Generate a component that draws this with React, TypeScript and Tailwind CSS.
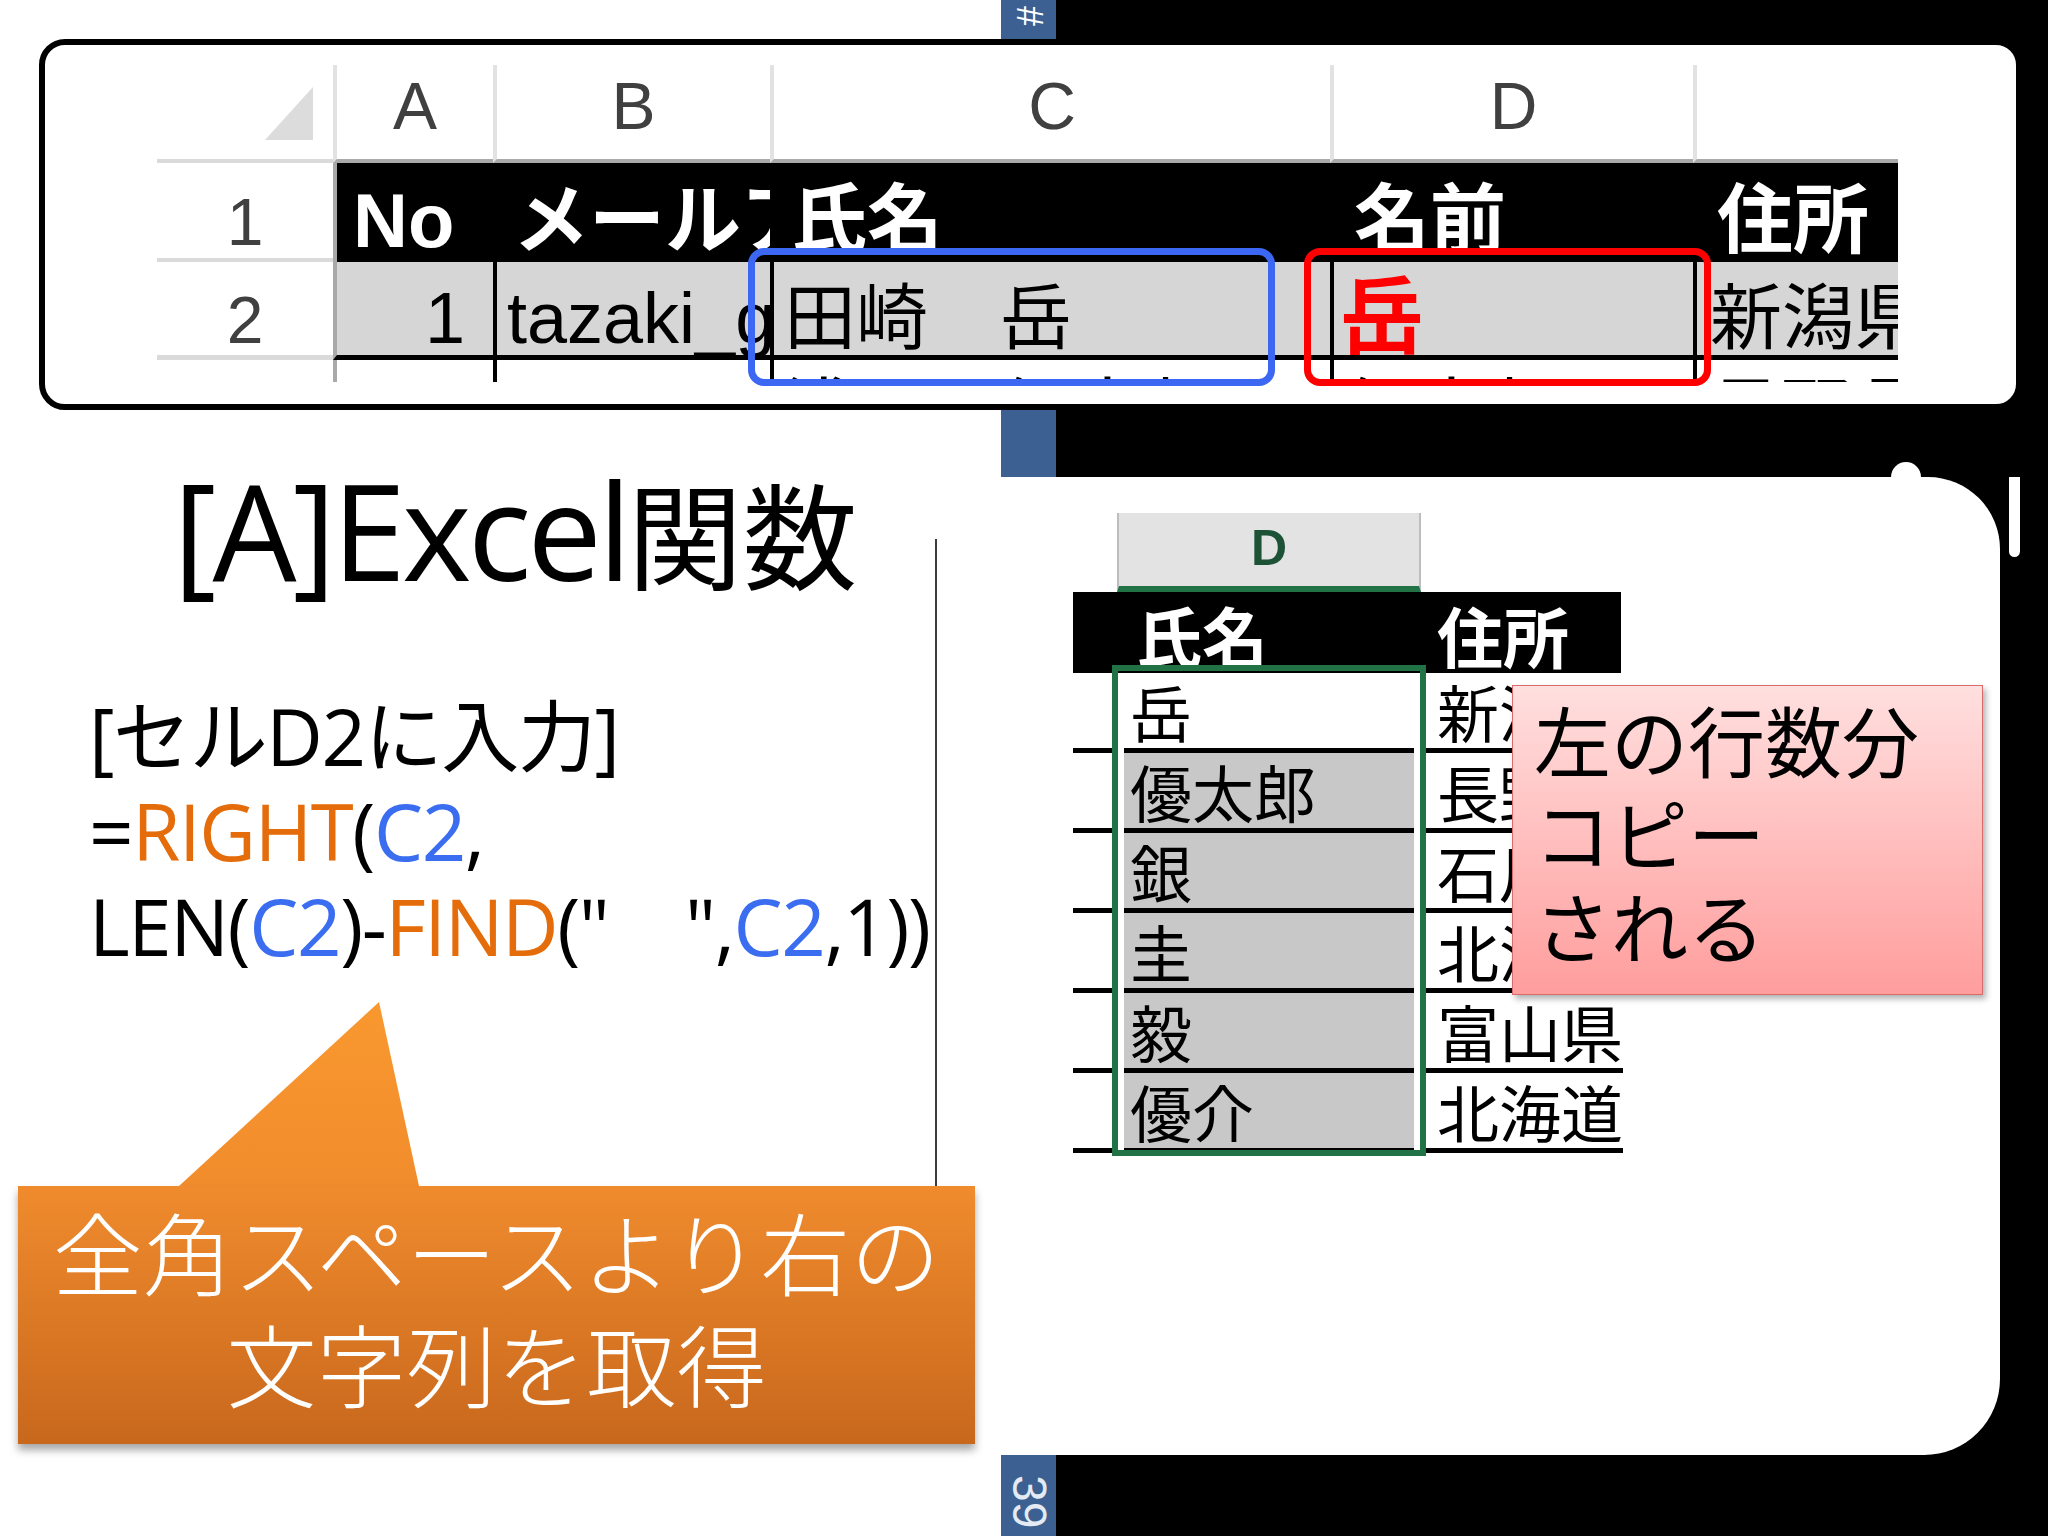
const sheetFont = "font-['Liberation_Sans','Noto_Sans_CJK_JP',sans-serif]";
const cjkFont = "font-['Noto_Sans_CJK_JP',sans-serif]";

// top spreadsheet: column widths include the 4px left border
const topCols = ['w-[160px]', 'w-[277px]', 'w-[560px]', 'w-[363px]', 'w-[205px]'];

function TopSheet() {
  const letters = ['A', 'B', 'C', 'D', ''];
  const head1 = [
    { t: 'No', pl: 'pl-[16px]' },
    { t: 'メールアドレス', pl: 'pl-[16px]' },
    { t: '氏名', pl: 'pl-[17px]' },
    { t: '名前', pl: 'pl-[20px]' },
    { t: '住所', pl: 'pl-[20px]' },
  ];
  const row3 = ['', '', '浅野　優太郎', '優太郎', '長野県'];

  return (
    <div className={`ml-[112px] mt-[20px] w-[1741px] h-[317px] overflow-hidden ${sheetFont}`}>
      {/* column letters */}
      <div className="flex h-[98px]">
        <div className="w-[176px] shrink-0 border-b-4 border-[#dadada] flex justify-end items-start pt-[22px] pr-[20px]">
          <svg width="48" height="53" viewBox="0 0 48 53">
            <polygon points="48,0 48,53 0,53" fill="#dcdcdc" />
          </svg>
        </div>
        {letters.map((l, i) => (
          <div
            key={i}
            className={`${topCols[i]} shrink-0 border-l-4 border-l-[#e2e2e2] border-b-4 border-b-[#a9a9a9] flex justify-center items-start pt-[8px] text-[66px] leading-none text-[#404040]`}
          >
            {l}
          </div>
        ))}
      </div>

      {/* row 1 : headers */}
      <div className="flex h-[99px]">
        <div className="w-[176px] shrink-0 border-b-4 border-[#dadada] flex justify-center pt-[26px] text-[66px] leading-none text-[#404040]">
          1
        </div>
        {head1.map((h, i) => (
          <div
            key={h.t}
            className={`${topCols[i]} shrink-0 overflow-hidden whitespace-nowrap bg-black text-white font-bold text-[76px] leading-none pt-[20px] border-l-4 ${i === 0 ? 'border-l-[#a9a9a9]' : 'border-l-black'} ${h.pl}`}
          >
            {h.t}
          </div>
        ))}
      </div>

      {/* row 2 : data */}
      <div className="flex h-[98px]">
        <div className="w-[176px] shrink-0 border-b-[5px] border-[#dadada] flex justify-center pt-[25px] text-[66px] leading-none text-[#404040]">
          2
        </div>
        <div className="w-[160px] shrink-0 bg-[#d6d6d6] border-l-4 border-l-[#a9a9a9] border-b-[5px] border-b-black text-right pr-[28px] pt-[20px] text-[72px] leading-none text-black">
          1
        </div>
        <div className="w-[277px] shrink-0 overflow-hidden whitespace-nowrap bg-[#d6d6d6] border-l-4 border-l-black border-b-[5px] border-b-black pl-[10px] pt-[20px] text-[72px] leading-none text-black">
          tazaki_gaku@
        </div>
        <div className="w-[560px] shrink-0 overflow-hidden whitespace-nowrap bg-[#d6d6d6] border-l-4 border-l-black border-b-[5px] border-b-black pl-[10px] pt-[20px] text-[72px] leading-none text-black">
          田崎　岳
        </div>
        <div className="w-[363px] shrink-0 overflow-hidden whitespace-nowrap bg-[#d6d6d6] border-l-4 border-l-black border-b-[5px] border-b-black pl-[6px] pt-[14px] text-[84px] leading-none font-bold text-[#ff0000]">
          岳
        </div>
        <div className="w-[205px] shrink-0 overflow-hidden whitespace-nowrap bg-[#d6d6d6] border-l-4 border-l-black border-b-[5px] border-b-black pl-[13px] pt-[20px] text-[72px] leading-none text-black">
          新潟県
        </div>
      </div>

      {/* row 3 : cut off by the picture edge */}
      <div className="flex h-[60px]">
        <div className="w-[176px] shrink-0" />
        {row3.map((t, i) => (
          <div
            key={i}
            className={`${topCols[i]} shrink-0 overflow-hidden whitespace-nowrap border-l-4 ${i === 0 ? 'border-l-[#a9a9a9]' : 'border-l-black'} pl-[10px] pt-[16px] text-[72px] leading-none text-black`}
          >
            {t}
          </div>
        ))}
      </div>
    </div>
  );
}

function TopSheetBox() {
  return (
    <div className="absolute left-[39px] top-[39px] w-[1983px] h-[371px] rounded-[26px] border-[6px] border-black bg-white">
      <TopSheet />
      <div className="absolute left-[703px] top-[203px] w-[527px] h-[138px] rounded-[16px] border-[7px] border-[#3b67f2]" />
      <div className="absolute left-[1259px] top-[203px] w-[407px] h-[138px] rounded-[16px] border-[7px] border-[#ff0000]" />
    </div>
  );
}

function LeftColumn() {
  const orange = 'text-[#e46c0a]';
  const blue = 'text-[#3a6df0]';
  return (
    <div className="w-[1001px] shrink-0 flex flex-col pt-[463px]">
      <div className="flex items-baseline pl-[173px] whitespace-nowrap text-black">
        <span className="font-['Open_Sans',sans-serif] text-[133px] leading-none tracking-[-4px]">[A]Excel</span>
        <span className={`${cjkFont} text-[115px] leading-none`}>関数</span>
      </div>

      <div className="mt-[93px] pl-[89px] font-['Open_Sans','Noto_Sans_CJK_JP',sans-serif] text-[78px] leading-[95px] tracking-[-1.4px] text-black whitespace-nowrap">
        <div>[セルD2に入力]</div>
        <div>
          =<span className={orange}>RIGHT</span>(<span className={blue}>C2</span>,
        </div>
        <div>
          LEN(<span className={blue}>C2</span>)-<span className={orange}>FIND</span>("　",
          <span className={blue}>C2</span>,1))
        </div>
      </div>

      <div className="mt-[28px] ml-[18px] w-[957px] flex flex-col">
        <svg width="957" height="184" viewBox="0 0 957 184" className="block">
          <defs>
            <linearGradient id="tail" x1="0" y1="0" x2="0" y2="1">
              <stop offset="0" stopColor="#f9982f" />
              <stop offset="1" stopColor="#f18c2c" />
            </linearGradient>
          </defs>
          <polygon points="161,184 361,0 401,184" fill="url(#tail)" />
        </svg>
        <div
          className={`h-[258px] bg-linear-to-b from-[#f08b2d] to-[#c8681d] shadow-[0_6px_8px_rgba(0,0,0,0.35)] pt-[8px] text-center text-white text-[90px] leading-[112px] font-light whitespace-nowrap ${cjkFont}`}
        >
          <div>全角スペースより右の</div>
          <div>文字列を取得</div>
        </div>
      </div>
    </div>
  );
}

function SlideStrip() {
  return (
    <div className="w-[55px] shrink-0 bg-[#3b6091] flex flex-col items-center justify-between pt-[6px] pb-[8px] font-['Liberation_Sans',sans-serif] text-white">
      <span className="[writing-mode:vertical-rl] text-[36px] leading-none">#</span>
      <span className="[writing-mode:vertical-rl] text-[48px] leading-none text-[#e3eaf3]">39</span>
    </div>
  );
}

function RightPanel() {
  const names = ['岳', '優太郎', '銀', '圭', '毅', '優介'];
  const places = ['新潟県', '長野県', '石川県', '北海道', '富山県', '北海道'];
  return (
    <div className="absolute left-[993px] top-[477px] w-[1007px] h-[978px] bg-white rounded-tr-[72px] rounded-br-[76px]">
      <div className={`relative ml-[80px] mt-[36px] w-[548px] ${sheetFont}`}>
        <div className="flex h-[79px]">
          <div className="w-[44px] shrink-0" />
          <div className="w-[304px] shrink-0 bg-[#e3e3e3] border-x-2 border-x-[#bdbdbd] border-b-[6px] border-b-[#217346] flex justify-center pt-[10px] text-[50px] leading-none font-bold text-[#1e5236]">
            D
          </div>
        </div>
        <div className="flex h-[81px] bg-black text-white font-bold text-[66px] leading-none pt-[15px] whitespace-nowrap">
          <div className="w-[39px] shrink-0" />
          <div className="w-[314px] shrink-0 pl-[24px]">氏名</div>
          <div className="pl-[11px]">住所</div>
        </div>
        {names.map((n, i) => (
          <div key={i} className="flex h-[80px] text-[62px] leading-none text-black whitespace-nowrap">
            <div className="w-[39px] shrink-0 border-b-[5px] border-black" />
            <div className="w-[314px] shrink-0 px-[12px]">
              <div className={`h-full border-b-[5px] border-black pl-[6px] pt-[13px] ${i === 0 ? 'bg-white' : 'bg-[#c8c8c8]'}`}>
                {n}
              </div>
            </div>
            <div className="flex-1 border-b-[5px] border-black pl-[11px] pt-[13px]">{places[i]}</div>
          </div>
        ))}
        {/* selected column outline */}
        <div className="absolute left-[39px] top-[152px] w-[314px] h-[491px] border-[6px] border-[#217346]" />
      </div>

      <div
        className={`absolute left-[519px] top-[208px] w-[471px] h-[310px] border border-[#d86c6c] bg-linear-to-b from-[#ffdfdf] to-[#ff9d9d] shadow-[3px_4px_6px_rgba(0,0,0,0.3)] pl-[21px] pt-[6px] text-[77px] leading-[93px] text-black whitespace-nowrap ${cjkFont}`}
      >
        <div>左の行数分</div>
        <div>コピー</div>
        <div>される</div>
      </div>
    </div>
  );
}

export default function App() {
  return (
    <div className="relative flex w-[2048px] h-[1536px] overflow-hidden bg-white">
      <LeftColumn />
      <SlideStrip />
      <div className="flex-1 bg-black" />

      {/* slide objects on the free canvas */}
      <div className="absolute left-[1891px] top-[462px] w-[30px] h-[30px] rounded-full bg-white" />
      <div className="absolute left-[2009px] top-[477px] w-[11px] h-[80px] rounded-b-[8px] bg-white" />
      <TopSheetBox />
      <RightPanel />
      <div className="absolute left-[935px] top-[539px] w-[2px] h-[647px] bg-[#3c3c3c]" />
    </div>
  );
}
